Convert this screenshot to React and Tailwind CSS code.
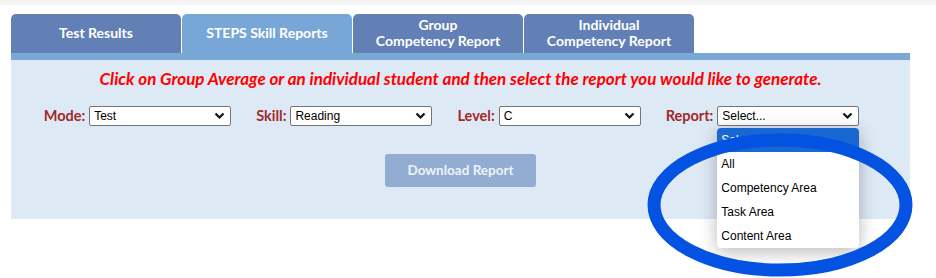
import React from 'react'

const tabs = [
  { label: ['Test Results'], active: false },
  { label: ['STEPS Skill Reports'], active: true },
  { label: ['Group', 'Competency Report'], active: false },
  { label: ['Individual', 'Competency Report'], active: false },
]

const fields = [
  { label: 'Mode:', value: 'Test' },
  { label: 'Skill:', value: 'Reading' },
  { label: 'Level:', value: 'C' },
  { label: 'Report:', value: 'Select...', open: true },
]

const options = ['All', 'Competency Area', 'Task Area', 'Content Area']

function Chevron() {
  return (
    <svg width="11" height="8" viewBox="0 0 11 8" className="shrink-0">
      <path d="M1.5 1.5 L5.5 5.5 L9.5 1.5" fill="none" stroke="#111" strokeWidth="2.2" />
    </svg>
  )
}

function FakeSelect({ value, open }) {
  return (
    <div className="relative">
      <div className="w-[142px] h-[20px] bg-white border border-[#767676] rounded-[2px] flex items-center justify-between pl-[4px] pr-[5px] text-[12px] text-black font-['Liberation_Sans',Arial,sans-serif]">
        <span>{value}</span>
        <Chevron />
      </div>
      {open && (
        <div className="absolute left-0 top-[22px] w-[142px] bg-white rounded-[4px] shadow-[0_4px_18px_rgba(0,0,0,0.28)] overflow-hidden z-10 text-[12px] text-black font-['Liberation_Sans',Arial,sans-serif]">
          <div className="h-[24px] bg-[#1967d2] text-white flex items-center pl-[4px]">Select...</div>
          {options.map((o) => (
            <div key={o} className="h-[24px] flex items-center pl-[4px]">{o}</div>
          ))}
        </div>
      )}
    </div>
  )
}

export default function App() {
  return (
    <div className="relative w-[936px] h-[278px] bg-white overflow-hidden font-['Lato',sans-serif]">
      <div className="h-[5px] bg-[#f5f5f5]" />

      <div className="pl-[11px] pt-[9px]">
        <div className="flex gap-[1px]">
          {tabs.map((t) => (
            <div
              key={t.label.join(' ')}
              className={`w-[170px] h-[39px] pb-[2px] rounded-t-[5px] flex flex-col items-center justify-center text-white font-bold text-[14px] leading-[16px] ${t.active ? 'bg-[#78a7d7]' : 'bg-[#6380b6]'}`}
            >
              {t.label.map((l) => (
                <span key={l}>{l}</span>
              ))}
            </div>
          ))}
        </div>

        <div className="w-[899px]">
          <div className="h-[7px] bg-[#7aa8d6]" />
          <div className="h-[159px] bg-[#dde9f5] flex flex-col items-center">
            <p className="mt-[9px] text-[17px] leading-[20px] font-bold italic text-[#ff0000]">
              Click on Group Average or an individual student and then select the report you would like to generate.
            </p>

            <div className="mt-[16px] flex items-center gap-[25px] ml-[-18px]">
              {fields.map((f) => (
                <div key={f.label} className="flex items-center gap-[4px]">
                  <span className="text-[14.5px] font-bold text-[#a3292b]">{f.label}</span>
                  <FakeSelect value={f.value} open={f.open} />
                </div>
              ))}
            </div>

            <div className="mt-[27px] w-[151px] h-[33px] rounded-[3px] bg-[#93acd1] flex items-center justify-center text-[13.5px] font-bold text-[#eef3fa]">
              Download Report
            </div>
          </div>
        </div>
      </div>

      <svg className="absolute left-0 top-0 pointer-events-none z-20" width="936" height="278">
        <ellipse cx="780" cy="205" rx="126" ry="65" fill="none" stroke="#0352e1" strokeWidth="13" />
      </svg>
    </div>
  )
}
